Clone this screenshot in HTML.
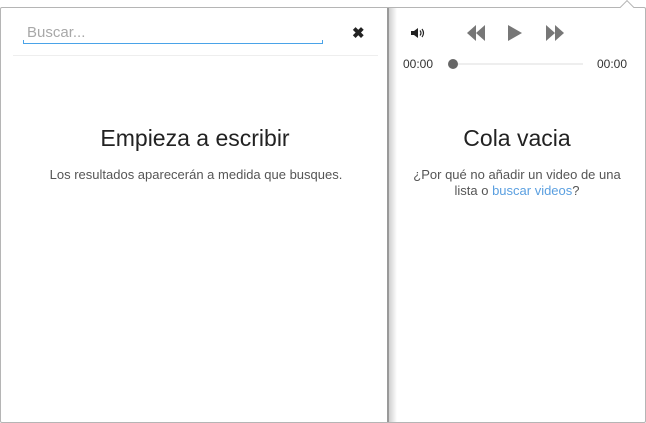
<!DOCTYPE html>
<html><head><style>
html,body{margin:0;padding:0;background:#fff;width:646px;height:423px;overflow:hidden;font-family:"Liberation Sans",sans-serif;}
.box{position:absolute;left:0;top:7px;width:644px;height:414px;border:1px solid #b5b5b5;border-radius:2px;background:#fff;}
.arrow{position:absolute;left:622px;top:2px;width:9px;height:9px;background:#fff;border-left:1px solid #b5b5b5;border-top:1px solid #b5b5b5;transform:rotate(45deg);}
.div{position:absolute;left:387px;top:8px;width:2px;height:414px;background:#999;}
.shadow{position:absolute;left:389px;top:8px;width:8px;height:414px;background:linear-gradient(to right,#cfcfcf,rgba(255,255,255,0));}
.input{position:absolute;left:23px;top:43px;width:300px;height:1px;background:#4aa3e8;}
.input:before,.input:after{content:"";position:absolute;bottom:0;width:1px;height:4px;background:#4aa3e8;}
.input:before{left:0}.input:after{right:0}
.ph{position:absolute;left:27px;top:24px;font-size:15px;color:#a8a8a8;}
.x{position:absolute;left:352px;top:24px;font-size:15px;font-weight:bold;color:#222;}
.hr{position:absolute;left:13px;top:55px;width:365px;height:1px;background:#eee;}
h1{position:absolute;margin:0;font-weight:normal;font-size:23px;color:#222;text-align:center;}
p{position:absolute;margin:0;font-size:13px;color:#555;text-align:center;line-height:16px;}
a{color:#5a9fe0;text-decoration:none;}
.time{position:absolute;top:57px;font-size:12px;color:#333;}
.track{position:absolute;left:452px;top:63px;width:131px;height:2px;background:#eee;}
.knob{position:absolute;left:448px;top:59px;width:10px;height:10px;border-radius:50%;background:#666;}
</style></head><body>
<div class="box"></div>
<div class="arrow"></div>
<div class="div"></div><div class="shadow"></div>
<div class="input"></div>
<div class="ph">Buscar...</div>
<div class="x">✖</div>
<div class="hr"></div>
<h1 style="left:0;width:390px;top:125px">Empieza a escribir</h1>
<p style="left:0;width:392px;top:167px">Los resultados aparecerán a medida que busques.</p>
<svg style="position:absolute;left:410px;top:26px" width="16" height="14" viewBox="0 0 16 14"><path d="M1 5h3l4-3v10l-4-3H1z" fill="#222"/><path d="M10 4.5q2 2.5 0 5M12 3q3 4 0 8" stroke="#222" stroke-width="1.2" fill="none"/></svg>
<svg style="position:absolute;left:466px;top:24px" width="20" height="18" viewBox="0 0 20 18"><path d="M10 1v16L1 9zM19 1v16L10 9z" fill="#777"/></svg>
<svg style="position:absolute;left:507px;top:24px" width="16" height="18" viewBox="0 0 16 18"><path d="M1 1v16l14-8z" fill="#777"/></svg>
<svg style="position:absolute;left:545px;top:24px" width="20" height="18" viewBox="0 0 20 18"><path d="M1 1v16l9-8zM10 1v16l9-8z" fill="#777"/></svg>
<div class="time" style="left:403px">00:00</div>
<div class="time" style="left:597px">00:00</div>
<div class="track"></div><div class="knob"></div>
<h1 style="left:389px;width:256px;top:125px">Cola vacia</h1>
<p style="left:389px;width:256px;top:167px">¿Por qué no añadir un video de una<br>lista o <a>buscar videos</a>?</p>
</body></html>
